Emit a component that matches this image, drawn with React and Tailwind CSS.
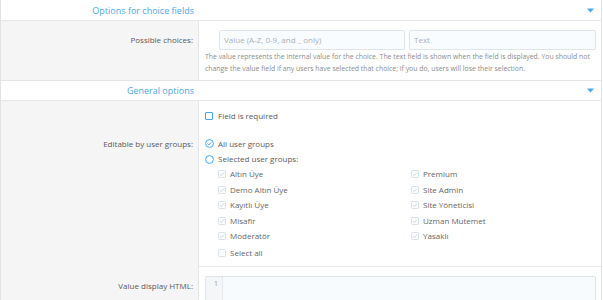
import React from 'react';

const leftGroups = ['Altın Üye', 'Demo Altın Üye', 'Kayıtlı Üye', 'Misafir', 'Moderatör'];
const rightGroups = ['Premium', 'Site Admin', 'Site Yöneticisi', 'Uzman Mutemet', 'Yasaklı'];

const Caret = () => (
  <svg width="7" height="5" viewBox="0 0 7 5" className="block">
    <path d="M0 0.5h7L3.5 4.5z" fill="#47a7eb" />
  </svg>
);

const SectionHeader = ({ title, top }) => (
  <div className={`flex h-[21px] items-center border-b border-[#e6e6e6] bg-white ${top ? '' : 'border-t'}`}>
    <div className="w-[193px] text-right text-[9px] leading-none text-[#4ba8e0]">{title}</div>
    <div className="flex flex-1 justify-end pr-[7px]">
      <Caret />
    </div>
  </div>
);

const Row = ({ label, labelClass = '', children, className = '' }) => (
  <div className="flex">
    <div className={`w-[198px] shrink-0 border-r border-[#e6e6e6] bg-[#f5f5f5] pr-[5px] text-right text-[8px] text-[#5a5a5a] ${labelClass}`}>
      {label}
    </div>
    <div className={`flex-1 bg-white pl-[6px] pr-[5px] ${className}`}>{children}</div>
  </div>
);

const BlueBox = () => (
  <span className="mr-[5px] inline-block h-[8px] w-[8px] shrink-0 rounded-[1px] border border-[#47a7eb]" />
);

const Radio = ({ checked }) => (
  <svg width="9" height="9" viewBox="0 0 9 9" className="mr-[4px] shrink-0">
    <circle cx="4.5" cy="4.5" r="3.9" fill="none" stroke="#47a7eb" strokeWidth="1" />
    {checked && <path d="M2.6 4.6l1.3 1.3 2.4-2.6" fill="none" stroke="#47a7eb" strokeWidth="1" />}
  </svg>
);

const DisabledCheck = ({ checked = true }) => (
  <svg width="8" height="8" viewBox="0 0 8 8" className="mr-[4px] shrink-0">
    <rect x="0.5" y="0.5" width="7" height="7" rx="0.8" fill="#fafcfd" stroke="#d5e2e8" strokeWidth="1" />
    {checked && <path d="M2 4.1l1.4 1.4 2.6-2.9" fill="none" stroke="#c3d7e0" strokeWidth="0.9" />}
  </svg>
);

const GroupItem = ({ name }) => (
  <div className="flex h-[15.4px] items-center text-[8px] text-[#666]">
    <DisabledCheck />
    <span>{name}</span>
  </div>
);

export default function App() {
  return (
    <div className="min-h-[300px] bg-white">
      <div className="w-[602px] overflow-hidden border-x border-[#e2e2e2] font-['Open_Sans',sans-serif]">
        <SectionHeader title="Options for choice fields" top />

        <Row label="Possible choices:" labelClass="pt-[9px] leading-[20px]" className="h-[59px] pt-[9px]">
          <div className="flex gap-[4px] pl-[14px]">
            <div className="flex h-[20px] w-[186px] items-center rounded-[2px] border border-[#dde5ea] bg-[#f9fcfe] px-[4px] text-[8px] text-[#a9b1b7]">
              Value (A-Z, 0-9, and _ only)
            </div>
            <div className="flex h-[20px] flex-1 items-center rounded-[2px] border border-[#dde5ea] bg-[#f9fcfe] px-[4px] text-[8px] text-[#a9b1b7]">
              Text
            </div>
          </div>
          <p className="mt-[1px] text-[6.9px] leading-[12px] text-[#8c8c8c]">
            The value represents the internal value for the choice. The text field is shown when the field is displayed. You should not
            change the value field if any users have selected that choice; if you do, users will lose their selection.
          </p>
        </Row>

        <SectionHeader title="General options" />

        <Row label="" className="h-[30px] pt-[7px]">
          <div className="flex h-[15.4px] items-center text-[8px] text-[#5a5a5a]">
            <BlueBox />
            <span>Field is required</span>
          </div>
        </Row>

        <Row label="Editable by user groups:" labelClass="pt-[5px] leading-[15.4px]" className="border-b border-[#e6e6e6] pb-[5px] pt-[5px]">
          <div className="flex h-[15.4px] items-center text-[8px] text-[#5a5a5a]">
            <Radio checked />
            <span>All user groups</span>
          </div>
          <div className="flex h-[15.4px] items-center text-[8px] text-[#5a5a5a]">
            <Radio />
            <span>Selected user groups:</span>
          </div>
          <div className="grid grid-cols-[193px_1fr] pl-[13px]">
            <div>
              {leftGroups.map((g) => (
                <GroupItem key={g} name={g} />
              ))}
            </div>
            <div>
              {rightGroups.map((g) => (
                <GroupItem key={g} name={g} />
              ))}
            </div>
          </div>
          <div className="mt-[1.5px] flex h-[15.4px] items-center pl-[13px] text-[8px] text-[#666]">
            <DisabledCheck checked={false} />
            <span>Select all</span>
          </div>
        </Row>

        <Row label="Value display HTML:" labelClass="pt-[11px] leading-[16px] h-[40px]" className="pt-[9px]">
          <div className="flex h-[40px] rounded-[2px] border border-[#dde5ea] bg-[#f7fbfe]">
            <div className="w-[17px] border-r border-[#e3e8ec] bg-[#f4f6f7] pr-[4px] pt-[2px] text-right text-[7px] text-[#9a9a9a]">
              1
            </div>
            <div className="flex-1" />
          </div>
        </Row>
      </div>
    </div>
  );
}
